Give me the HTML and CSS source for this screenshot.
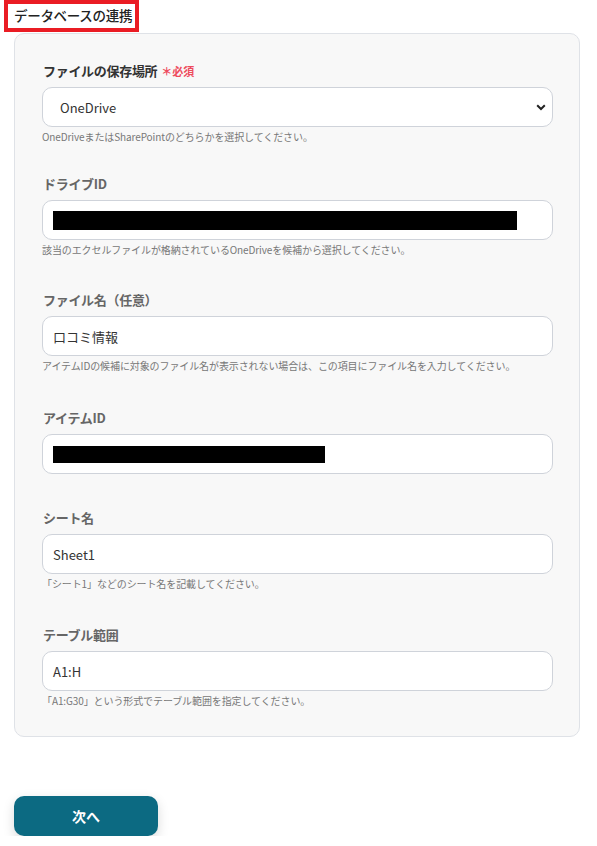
FILE: index.html
```html
<!DOCTYPE html>
<html lang="ja">
<head>
<meta charset="utf-8">
<link rel="stylesheet" href="styles.css">
</head>
<body>
<div class="page">
  <div class="heading"><span>データベースの連携</span></div>
  <div class="card">
    <div class="section first">
      <div class="label dark">ファイルの保存場所<span class="req">＊必須</span></div>
      <div class="field select">
        <span class="value sel">OneDrive</span>
        <svg class="chev" width="10" height="7" viewBox="0 0 10 7"><path d="M1.2 1.3 L5 5 L8.8 1.3" fill="none" stroke="#222" stroke-width="2"/></svg>
      </div>
      <div class="help">OneDriveまたはSharePointのどちらかを選択してください。</div>
    </div>
    <div class="section s2">
      <div class="label">ドライブID</div>
      <div class="field"><span class="mask w1"></span></div>
      <div class="help">該当のエクセルファイルが格納されているOneDriveを候補から選択してください。</div>
    </div>
    <div class="section">
      <div class="label">ファイル名（任意）</div>
      <div class="field"><span class="value">口コミ情報</span></div>
      <div class="help">アイテムIDの候補に対象のファイル名が表示されない場合は、この項目にファイル名を入力してください。</div>
    </div>
    <div class="section">
      <div class="label">アイテムID</div>
      <div class="field"><span class="mask w2"></span></div>
    </div>
    <div class="section">
      <div class="label">シート名</div>
      <div class="field"><span class="value">Sheet1</span></div>
      <div class="help">「シート1」などのシート名を記載してください。</div>
    </div>
    <div class="section last">
      <div class="label">テーブル範囲</div>
      <div class="field"><span class="value">A1:H</span></div>
      <div class="help">「A1:G30」という形式でテーブル範囲を指定してください。</div>
    </div>
  </div>
  <div class="actions">
    <button class="next">次へ</button>
  </div>
</div>
</body>
</html>
```
FILE: styles.css
```css
* { box-sizing: border-box; }
html, body { margin: 0; padding: 0; background: #fff; }
body {
  font-family: "Noto Sans CJK JP", "Noto Sans", sans-serif;
  color: #333;
  width: 597px;
}
.page { padding: 0 17px 0 14px; }
.heading {
  margin-left: -10px;
  width: 135px;
  height: 32px;
  border: 4px solid #ea1c24;
  background: #fff;
  display: flex;
  align-items: center;
  padding-left: 6px;
}
.heading span {
  font-size: 13.5px;
  font-weight: 500;
  color: #222;
  letter-spacing: -0.3px;
  line-height: 1;
}
.card {
  margin-top: 1px;
  width: 566px;
  border: 1px solid #dfe2e7;
  border-radius: 10px;
  background: #f8f8f8;
  padding: 28px 26px 28px 27px;
  display: flex;
  flex-direction: column;
}
.section { display: flex; flex-direction: column; margin-bottom: 35px; }
.section.first { margin-bottom: 31px; }
.section.s2 { margin-bottom: 34px; }
.section:nth-child(3) { margin-bottom: 36px; }
.section.last { margin-bottom: 0; }
.label {
  font-size: 13px;
  font-weight: 700;
  line-height: 18px;
  color: #666;
  margin-left: 1px;
  margin-bottom: 7px;
  letter-spacing: -0.3px;
  display: flex;
  align-items: center;
}
.label.dark { color: #333; }
.req {
  color: #ee4b5e;
  font-size: 11px;
  font-weight: 700;
  margin-left: 4px;
  letter-spacing: 0;
}
.field {
  height: 40px;
  background: #fff;
  border: 1px solid #cfd3da;
  border-radius: 10px;
  display: flex;
  align-items: center;
  padding-left: 10px;
  position: relative;
}
.field.select { padding-left: 17px; }
.value {
  font-size: 13px;
  color: #333;
  line-height: 1;
}
.chev { position: absolute; right: 6px; top: 16px; }
.mask { display: block; background: #000; height: 17px; }
.mask.w1 { width: 464px; height: 19px; }
.mask.w2 { width: 272px; }
.help {
  margin-top: 3px;
  font-size: 10px;
  line-height: 14px;
  color: #777;
  letter-spacing: -0.1px;
}
.actions { margin-top: 59px; }
.next {
  width: 144px;
  height: 40px;
  border: none;
  border-radius: 10px;
  background: #0c6a82;
  color: #fff;
  font-family: "Noto Sans CJK JP", sans-serif;
  font-size: 14px;
  font-weight: 700;
  box-shadow: 0 4px 12px rgba(0, 0, 0, 0.15);
}
```
